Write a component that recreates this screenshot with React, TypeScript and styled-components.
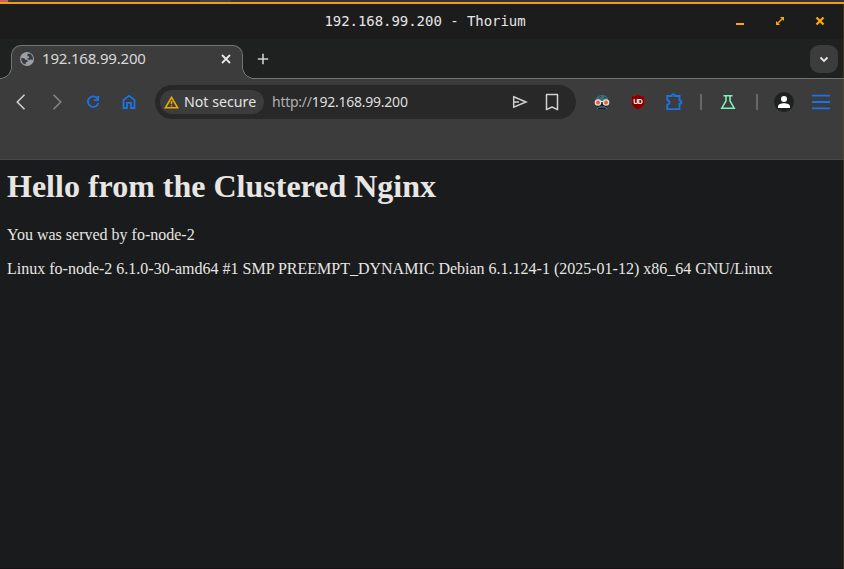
import React from "react";
import styled, { createGlobalStyle } from "styled-components";

const STRIP = "#1f2120";
const TOOLBAR = "#3c3c3c";
const LINE = "#737574";
const BLUE = "#1a73e8";
const AMBER = "#ffa800";
const PAGE = "#191b1c";

const GlobalStyle = createGlobalStyle`
  * { box-sizing: border-box; }
  body { margin: 0; background: ${PAGE}; overflow: hidden; }
`;

const Window = styled.div`
  display: flex;
  flex-direction: column;
  width: 844px;
  height: 569px;
  overflow: hidden;
  position: relative;
  background: ${PAGE};
  font-family: "Noto Sans", sans-serif;
  &::after {
    content: "";
    position: absolute;
    top: 4px;
    right: 0;
    bottom: 0;
    width: 1px;
    background: rgba(130, 95, 15, 0.35);
  }
`;

const Desktop = styled.div`
  height: 2px;
  background: linear-gradient(90deg, #c4626a 0 8px, #3a3a42 8px 11px, #2f323c 11px 200px, #3c404a 200px 231px, #2f323c 231px);
`;

const TitleBar = styled.header`
  display: grid;
  grid-template-columns: 1fr auto 1fr;
  align-items: center;
  height: 37px;
  border-top: 2px solid #f0a004;
  background: #1c1c1c;
`;

const Title = styled.div`
  grid-column: 2;
  margin: 0 0 2px 6px;
  color: #e6e6e6;
  font: 14px/20px "DejaVu Sans Mono", monospace;
  letter-spacing: -0.05px;
  white-space: pre;
`;

const WindowButtons = styled.div`
  display: flex;
  justify-content: flex-end;
  gap: 28px;
  padding: 0 18px 1px 0;
`;

const TabStrip = styled.div`
  display: flex;
  height: 40px;
  flex: none;
  padding: 6px 6px 0 11px;
  background: ${STRIP};
  border-bottom: 1px solid ${LINE};
`;

const Tab = styled.div`
  position: relative;
  display: flex;
  align-items: center;
  width: 232px;
  height: 34px;
  padding: 0 10px 7px 8px;
  background: ${TOOLBAR};
  border: 1px solid ${LINE};
  border-bottom: 0;
  border-radius: 10px 10px 0 0;
  &::before, &::after {
    content: "";
    position: absolute;
    bottom: 0;
    width: 12px;
    height: 12px;
  }
  &::before {
    left: -12px;
    background: radial-gradient(circle at 0 0, ${STRIP} 10.7px, ${LINE} 11.1px 11.6px, ${TOOLBAR} 12px);
  }
  &::after {
    right: -12px;
    background: radial-gradient(circle at 100% 0, ${STRIP} 10.7px, ${LINE} 11.1px 11.6px, ${TOOLBAR} 12px);
  }
`;

const TabTitle = styled.span`
  flex: 1;
  margin-left: 8px;
  padding-bottom: 2px;
  color: #d8d8d8;
  font-size: 15px;
  letter-spacing: -0.2px;
  line-height: 20px;
`;

const NewTab = styled.div`
  display: flex;
  margin: 8px 0 0 14px;
`;

const TabSearch = styled.div`
  display: grid;
  place-items: center;
  width: 28px;
  height: 28px;
  margin-left: auto;
  border-radius: 9px;
  background: ${TOOLBAR};
`;

const Toolbar = styled.nav`
  display: flex;
  flex: none;
  align-items: flex-start;
  height: 81px;
  padding: 6px 12px 0 11px;
  background: ${TOOLBAR};
  border-bottom: 1px solid #474747;
`;

const Cell = styled.div<{ $w: number }>`
  display: grid;
  place-items: center;
  flex: none;
  width: ${(p) => p.$w}px;
  height: 34px;
`;

const AddressBar = styled.div`
  display: flex;
  flex: none;
  align-items: center;
  width: 421px;
  height: 34px;
  padding: 0 15px 0 5px;
  border-radius: 17px;
  background: #282828;
`;

const SecurityChip = styled.div`
  display: flex;
  align-items: center;
  gap: 5px;
  width: 104px;
  height: 24px;
  padding-left: 4px;
  border-radius: 12px;
  background: ${TOOLBAR};
`;

const ChipLabel = styled.span`
  color: #e3e3e3;
  font-size: 14.2px;
  line-height: 20px;
  white-space: nowrap;
`;

const Url = styled.span`
  flex: 1;
  margin-left: 8px;
  color: #dedede;
  font-size: 14px;
  line-height: 20px;
  letter-spacing: -0.25px;
`;

const Scheme = styled.span`
  color: #b0b0b0;
`;

const Actions = styled.div`
  display: flex;
  align-items: center;
  gap: 15px;
`;

const Divider = styled.i`
  width: 2px;
  height: 16px;
  background: #686868;
`;

const Avatar = styled.div`
  display: grid;
  place-items: center;
  width: 20px;
  height: 20px;
  border-radius: 50%;
  background: ${STRIP};
`;

const Page = styled.main`
  flex: 1;
  padding: 8px 7px;
  color: #e8e6e3;
  font-family: "Liberation Serif", serif;
  font-size: 16px;
  line-height: 18px;
  border-bottom: 1px solid #141415;
`;

const Heading = styled.h1`
  margin: 0 0 21px;
  font-size: 32px;
  line-height: 37px;
`;

const Paragraph = styled.p`
  margin: 0 0 16px;
`;

const Icon = ({ s = 16, w = 1.8, c = "#d0d0d0", children }: { s?: number; w?: number; c?: string; children: React.ReactNode }) => (
  <svg width={s} height={s} viewBox={`0 0 ${s} ${s}`} fill="none" stroke={c} strokeWidth={w} display="block">
    {children}
  </svg>
);

const Globe = () => (
  <svg width="14" height="14" viewBox="0 0 14 14" display="block">
    <circle cx="7" cy="7" r="7" fill="#9aa0a6" />
    <path d="M7.8 1.8h3l2 3.2v3L11 7.5 8.7 8 7 6.2h2V4.5L7.2 4zM1.3 6l3 .2 1.2 1.5h1.8l.4 2-2 .9v2L3 11.4 1.3 8.5z" fill={TOOLBAR} />
  </svg>
);

const Goggles = () => (
  <svg width="16" height="16" viewBox="0 0 16 16" display="block">
    <path d="M1.8 7C1.8 3 4.500 1 8 1s6.200 2 6.200 6z" fill="#347080" />
    <path d="M5 3.5 7 2.2M10 3.5h2" stroke="#224650" />
    <path d="M3 7h10v8H3z" fill="#10232d" />
    <circle cx="4" cy="8.5" r="3.3" fill="#f1d8cc" />
    <circle cx="12" cy="8.5" r="3.3" fill="#f1d8cc" />
    <circle cx="4" cy="8.5" r="1.9" fill="#e0603f" />
    <circle cx="12" cy="8.5" r="1.9" fill="#e0603f" />
    <path d="M6.5 7.5h3" stroke="#f1d8cc" />
    <path d="M5 13h6M3 15l1.5-2M13 15l-1.5-2" stroke="#4d91a0" />
  </svg>
);

const ShieldText = styled.text`
  font: bold 7px "Liberation Sans", sans-serif;
  letter-spacing: -0.6px;
`;

const Shield = () => (
  <svg width="16" height="16" viewBox="0 0 16 16" display="block">
    <path d="M8 .5C6 2 4 2.2 1.4 2.2V8c0 4 3 6 6.6 7.7C11.6 14 14.6 12 14.6 8V2.2C12 2.2 10 2 8 .5z" fill="#800000" stroke="#982b2b" strokeWidth=".5" />
    <ShieldText x="7.7" y="9.9" textAnchor="middle" fill="#fff">UD</ShieldText>
  </svg>
);

export default function App() {
  return (
    <>
      <GlobalStyle />
      <Window>
        <Desktop />
        <TitleBar>
          <Title>192.168.99.200 - Thorium</Title>
          <WindowButtons>
            <Icon s={12} c={AMBER} w={2}><path d="M2 9h8" /></Icon>
            <Icon s={12} c={AMBER} w={1.5}>
              <path d="M3 9l6-6" />
              <path d="M6 2h4v4zM2 6v4h4z" fill={AMBER} stroke="none" />
            </Icon>
            <Icon s={12} c={AMBER} w={2.2}><path d="M2.5 2.5l7 7M9.5 2.5l-7 7" /></Icon>
          </WindowButtons>
        </TitleBar>
        <TabStrip>
          <Tab>
            <Globe />
            <TabTitle>192.168.99.200</TabTitle>
            <Icon s={12} c="#e8e8e8" w={1.8}><path d="M2 2l8 8M10 2l-8 8" /></Icon>
          </Tab>
          <NewTab>
            <Icon s={12} w={1.6}><path d="M6 .8v10.4M.8 6h10.4" /></Icon>
          </NewTab>
          <TabSearch>
            <Icon s={12} c="#e8e8e8" w={1.8}><path d="M2.5 4.5 6 8l3.5-3.5" /></Icon>
          </TabSearch>
        </TabStrip>
        <Toolbar>
          <Cell $w={20}><Icon w={1.6}><path d="M11.5 .8 4.3 8l7.2 7.2" /></Icon></Cell>
          <Cell $w={52}><Icon c="#858585" w={1.6}><path d="M4.5 .8 11.7 8 4.5 15.2" /></Icon></Cell>
          <Cell $w={20}>
            <Icon c={BLUE}>
              <path d="M12.6 4.7A5.3 5.3 0 1 0 13.3 9" />
              <path d="M13.2 2v4.2H9" />
            </Icon>
          </Cell>
          <Cell $w={52}><Icon c={BLUE}><path d="M2.5 14V5.9L8 1.8l5.5 4.1V14H10V8.9H6V14z" /></Icon></Cell>
          <AddressBar>
            <SecurityChip>
              <Icon s={15} c="#e8ab00" w={1.6}>
                <path d="M7.5 2.3 1.4 12.8h12.2zM7.5 6v3.3M7.5 10.2v1.3" />
              </Icon>
              <ChipLabel>Not secure</ChipLabel>
            </SecurityChip>
            <Url><Scheme>http://</Scheme>192.168.99.200</Url>
            <Actions>
              <Icon w={1.5}><path d="M1.7 2.8 14 8 1.7 13.2zM2 8h5" /></Icon>
              <Icon s={18} w={1.5}><path d="M3.5 1.5h11v15.2L9 14l-5.5 2.7z" strokeLinejoin="round" /></Icon>
            </Actions>
          </AddressBar>
          <Cell $w={52}><Goggles /></Cell>
          <Cell $w={20}><Shield /></Cell>
          <Cell $w={52}>
            <Icon s={18} c={BLUE} w={1.8}>
              <path d="M2.2 3h4.6c0-2.5 3-2.5 3 0h4.7v4.3c2.6 0 2.6 3.4 0 3.4V16.2H2.2v-4.5c3-.5 3-4 0-4.7z" />
            </Icon>
          </Cell>
          <Cell $w={2}><Divider /></Cell>
          <Cell $w={52}>
            <Icon c="#81f5bd" w={1.5}><path d="M3.5 1.7h9M6 2v5L1.8 14.2h12.4L10 7V2" /></Icon>
          </Cell>
          <Cell $w={6}><Divider /></Cell>
          <Cell $w={48}>
            <Avatar>
              <svg width="12" height="12" viewBox="0 0 12 12">
                <circle cx="6" cy="3" r="3" fill="#fff" />
                <path d="M0 12v-1.5C0 8.3 3 7.2 6 7.2s6 1.1 6 3.300V12z" fill="#fff" />
              </svg>
            </Avatar>
          </Cell>
          <Cell $w={26}><Icon s={18} c={BLUE} w={1.8}><path d="M0 2.7h18M0 9h18M0 15.3h18" /></Icon></Cell>
        </Toolbar>
        <Page>
          <Heading>Hello from the Clustered Nginx</Heading>
          <Paragraph>You was served by fo-node-2</Paragraph>
          <Paragraph>Linux fo-node-2 6.1.0-30-amd64 #1 SMP PREEMPT_DYNAMIC Debian 6.1.124-1 (2025-01-12) x86_64 GNU/Linux</Paragraph>
        </Page>
      </Window>
    </>
  );
}
